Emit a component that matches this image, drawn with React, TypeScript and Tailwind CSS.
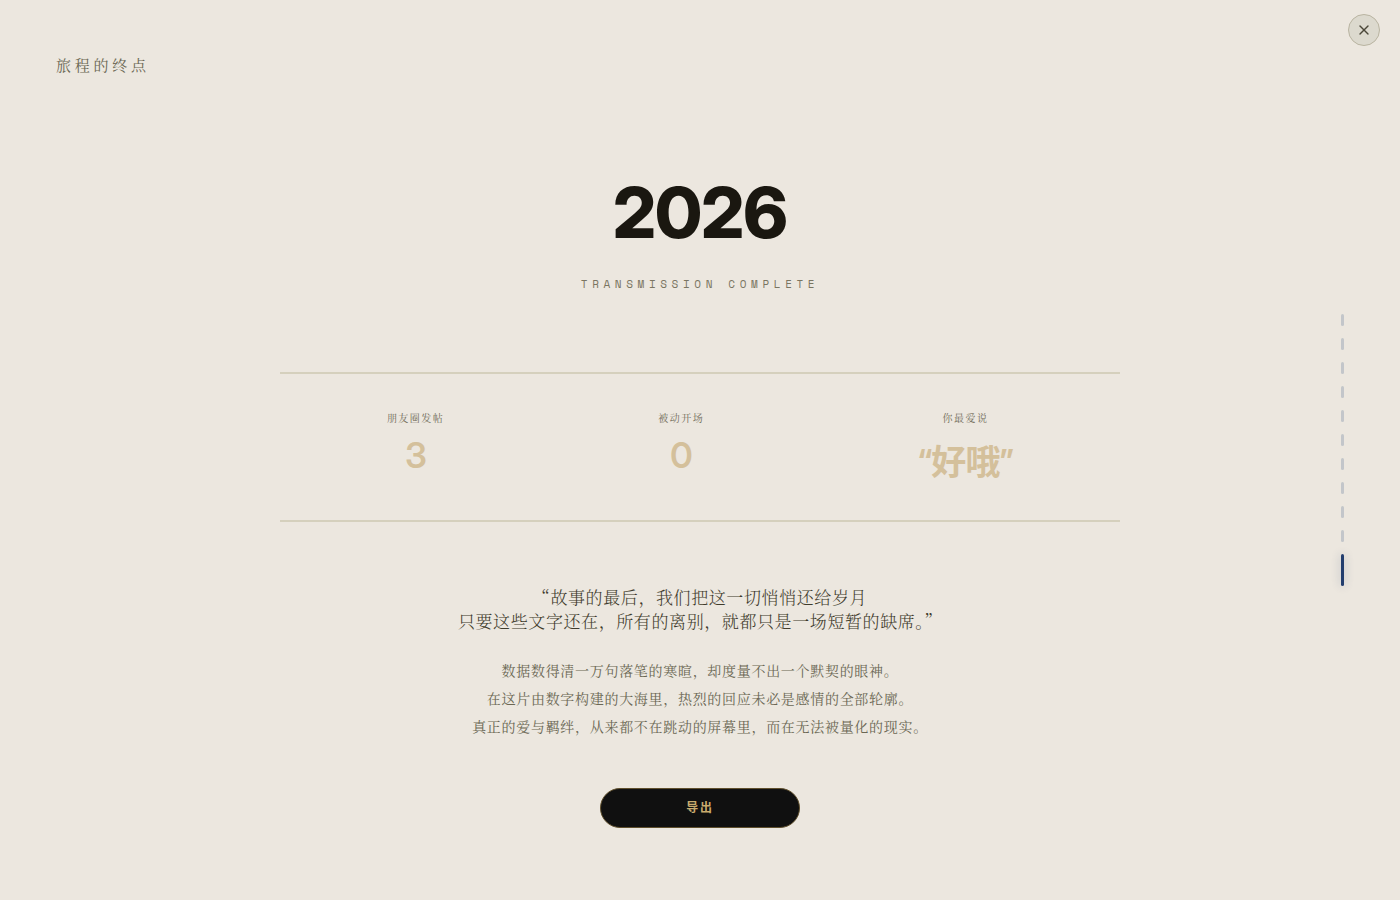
import { X } from 'lucide-react';

const stats = [
  { label: '朋友圈发帖', value: '3' },
  { label: '被动开场', value: '0' },
  { label: '你最爱说', value: '“好哦”' },
];

const pages = Array.from({ length: 11 }, (_, i) => i);
const currentPage = 10;

export default function App() {
  return (
    <div className="relative flex min-h-screen w-full flex-col bg-[#ece7df] font-['Noto_Serif_CJK_SC','Noto_Serif_SC','Noto_Sans_CJK_SC',serif]">
      {/* Close */}
      <button
        type="button"
        aria-label="关闭"
        className="absolute top-[14px] right-5 flex h-8 w-8 cursor-pointer items-center justify-center rounded-full border border-[#b9b4a1] bg-[#dcd9ce] text-[#4a4738]"
      >
        <X size={16} strokeWidth={2} />
      </button>

      <header className="px-14 pt-14">
        <p className="text-[15px] leading-[18px] tracking-[0.25em] text-[#6b6754]">旅程的终点</p>
      </header>

      <main className="mx-auto flex w-full max-w-[840px] flex-col items-center pt-[103px] pb-[72px] text-center">
        <h1 className="font-['Inter_Display','Inter',sans-serif] text-[70px] leading-[72px] font-extrabold tracking-[-0.01em] text-[#1a1710]">
          2026
        </h1>
        <p className="mt-[27px] font-['Space_Mono','Liberation_Mono',monospace] text-[11px] leading-4 tracking-[0.42em] text-[#7a7561]">
          TRANSMISSION COMPLETE
        </p>

        {/* Stats */}
        <dl className="mt-20 flex w-full items-start justify-around border-y-2 border-[#d5d0bd] pt-9 pb-[35px]">
          {stats.map((stat) => (
            <div key={stat.label} className="flex flex-col items-center">
              <dt className="text-[10px] leading-4 tracking-[0.15em] text-[#716c59]">{stat.label}</dt>
              <dd className="mt-2 font-['Inter_Display','Inter','Noto_Sans_CJK_SC',sans-serif] text-[35px] leading-[normal] font-semibold tracking-[-0.02em] text-[#d4c09b]">
                {stat.value}
              </dd>
            </div>
          ))}
        </dl>

        <blockquote className="mt-[63px] text-[17px] leading-6 font-light tracking-[0.035em] text-[#3f3b2c]">
          “故事的最后，我们把这一切悄悄还给岁月
          <br />
          只要这些文字还在，所有的离别，就都只是一场短暂的缺席。”
        </blockquote>
        <p className="mt-[23px] text-[14px] leading-7 tracking-[0.05em] text-[#6b6754]">
          数据数得清一万句落笔的寒暄，却度量不出一个默契的眼神。
          <br />
          在这片由数字构建的大海里，热烈的回应未必是感情的全部轮廓。
          <br />
          真正的爱与羁绊，从来都不在跳动的屏幕里，而在无法被量化的现实。
        </p>

        <button
          type="button"
          className="mt-12 h-10 w-[200px] cursor-pointer rounded-full border border-[#5f4f2c] bg-[#101010] font-['Inter','Noto_Sans_CJK_SC',sans-serif] text-[12px] font-semibold tracking-[0.15em] text-[#c9ab6e]"
        >
          导出
        </button>
      </main>

      {/* Page indicator */}
      <nav className="absolute top-1/2 right-14 flex -translate-y-1/2 flex-col gap-3">
        {pages.map((page) => (
          <span
            key={page}
            className={
              page === currentPage
                ? 'h-8 w-[3px] rounded-[2px] bg-[#233e6e] shadow-[0_0_10px_rgba(35,62,110,0.3)]'
                : 'h-3 w-[3px] rounded-[2px] bg-[#c3c6ca]'
            }
          />
        ))}
      </nav>
    </div>
  );
}
